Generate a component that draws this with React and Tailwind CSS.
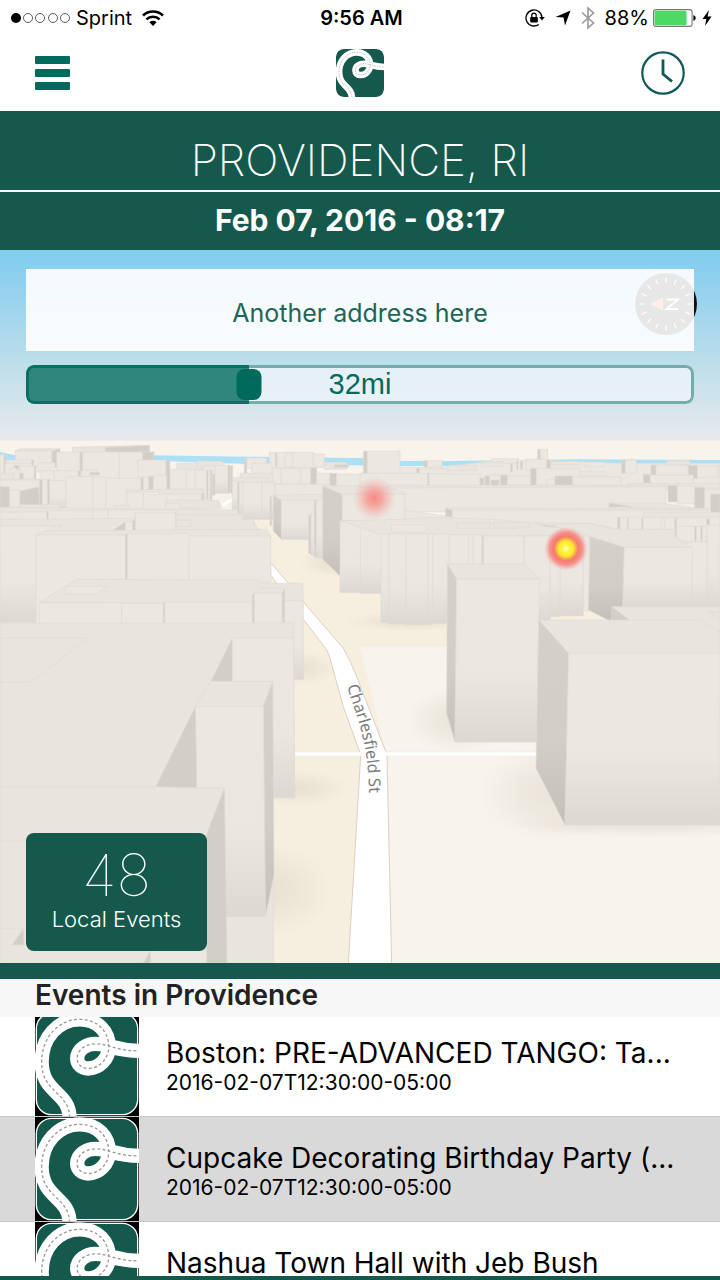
import React, { useState } from "react";

const events = [
  { title: "Boston: PRE-ADVANCED TANGO: Ta...", time: "2016-02-07T12:30:00-05:00" },
  { title: "Cupcake Decorating Birthday Party (...", time: "2016-02-07T12:30:00-05:00" },
  { title: "Nashua Town Hall with Jeb Bush" },
];

const ROAD =
  "M104 318 C104 240 20 245 20 150 C20 78 70 22 135 22 C190 22 222 60 222 105 C222 142 192 170 160 170 C140 170 127 157 127 140 C127 112 155 96 182 96 C225 96 240 117 316 117";

const RoadLogo = ({ className, framed = false }) => (
  <svg viewBox="0 0 313 313" className={className} aria-hidden="true">
    {framed && <rect width="313" height="313" fill="#000" />}
    <rect
      x={framed ? 4 : 0}
      y={framed ? 4 : 0}
      width={framed ? 305 : 313}
      height={framed ? 305 : 313}
      rx="46"
      fill="#14594b"
      stroke={framed ? "#fff" : "none"}
      strokeWidth="4"
    />
    <path d={ROAD} fill="none" stroke="#fff" strokeWidth="43" />
    <path d={ROAD} fill="none" stroke="#999" strokeWidth="4" strokeDasharray="9 7" />
  </svg>
);

const StatusBar = () => (
  <div className="grid h-9 grid-cols-[1fr_auto_1fr] items-center pl-[11px] pr-2 text-xl text-black">
    <div className="flex items-center">
      <svg viewBox="0 0 60 12" className="h-3 w-[60px]" aria-hidden="true">
        <circle cx="5" cy="6" r="5" />
        {[17, 29, 42, 54].map((x) => (
          <circle key={x} cx={x} cy="6" r="4.5" fill="none" stroke="#333" strokeWidth="0.8" />
        ))}
      </svg>
      <span className="ml-[5px]">Sprint</span>
      <svg viewBox="0 0 22 16" className="ml-[10px] h-4 w-[22px]" fill="none" stroke="#000" aria-hidden="true">
        <path d="M1 5.5 A14.5 14.5 0 0 1 21 5.5" strokeWidth="2.6" />
        <path d="M4.4 9.4 A9.6 9.6 0 0 1 17.6 9.4" strokeWidth="2.5" />
        <path d="M11 16 L7.4 12.2 A5.2 5.2 0 0 1 14.6 12.2 Z" fill="#000" stroke="none" />
      </svg>
    </div>
    <span className="font-semibold">9:56 AM</span>
    <div className="flex items-center justify-end">
      <svg viewBox="0 0 20 18" className="h-[18px] w-5" fill="none" stroke="#000" aria-hidden="true">
        <path d="M17 8.5 A8 8 0 1 0 13.8 15.4" strokeWidth="1.3" />
        <path d="M14.2 8 h5.6 l-2.8 3.6 z" fill="#000" stroke="none" />
        <rect x="5.2" y="8" width="7.6" height="5.6" rx="0.8" fill="#000" stroke="none" />
        <path d="M6.8 8 V6.3 a2.2 2.2 0 0 1 4.4 0 V8" strokeWidth="1.3" />
      </svg>
      <svg viewBox="0 0 16 16" className="ml-[10px] h-4 w-4" aria-hidden="true">
        <path d="M15.5 0.5 L10 15.5 L8.6 7.4 L0.5 7 Z" />
      </svg>
      <svg viewBox="0 0 14 24" className="ml-[10px] h-6 w-[14px]" fill="none" stroke="#999" strokeWidth="1.6" aria-hidden="true">
        <path d="M1 6.5 L12.5 17 L7 22 V2 L12.5 7 L1 17.5" />
      </svg>
      <span className="ml-[10px]">88%</span>
      <svg viewBox="0 0 43 18" className="ml-1 h-[18px] w-[43px]" aria-hidden="true">
        <rect x="0.6" y="0.6" width="38.5" height="16.8" rx="2.5" fill="#fff" stroke="#777" strokeWidth="1.1" />
        <rect x="1.6" y="1.8" width="32" height="14.4" rx="1.5" fill="#4cd964" />
        <path d="M40.4 6 q2.4 1 2.4 3 t-2.4 3 z" />
      </svg>
      <svg viewBox="0 0 10 16" className="ml-[6px] h-4 w-[10px]" aria-hidden="true">
        <path d="M7 0 L0.5 9 H4.3 L3 16 L9.6 6.6 H5.6 Z" />
      </svg>
    </div>
  </div>
);

const NavBar = () => (
  <nav className="grid h-[75px] grid-cols-3 items-center px-[35px] pb-[2px]">
    <button type="button" aria-label="Menu" className="flex w-[35px] flex-col gap-[5px]">
      <span className="h-2 rounded-[1px] bg-[#006b5c]" />
      <span className="h-2 rounded-[1px] bg-[#006b5c]" />
      <span className="h-2 rounded-[1px] bg-[#006b5c]" />
    </button>
    <RoadLogo className="h-12 w-12 justify-self-center rounded-lg" />
    <button type="button" aria-label="History" className="justify-self-end">
      <svg viewBox="0 0 44 44" className="block h-11 w-11" fill="none" stroke="#0f5a57">
        <circle cx="22" cy="22" r="20.7" strokeWidth="2.2" />
        <path d="M22 8.5 V23 L31 30.5" strokeWidth="2.8" />
      </svg>
    </button>
  </nav>
);

// building surfaces
const fills = {
  f: "#ebe8e1", // wall
  g: "url(#wall)", // wall fading towards the street
  t: "#e8e5de", // roof
  d: "#d2cfc8", // shaded side
  s: "url(#side)",
};

const Shapes = ({ list }) =>
  list.map(([fill, points], i) => (
    <polygon key={i} points={points} fill={fills[fill]} stroke="#dedbd4" strokeWidth="2" />
  ));

const box = (fill, x1, y1, x2, y2) => [fill, `${x1},${y1} ${x2},${y1} ${x2},${y2} ${x1},${y2}`];

const westFar = [
  box("f", 0, 73, 12, 140),
  box("d", 12, 73, 17, 140),
  ["t", "46,62 60,56 180,56 170,64"],
  box("f", 46, 63, 156, 112),
  ["d", "156,63 180,56 180,70 170,112 156,112"],
  ["t", "217,52 448,46 448,68 217,68"],
  ["d", "316,52 448,46 448,66 316,66"],
  box("f", 170, 66, 240, 145),
  box("d", 240, 66, 248, 125),
  box("f", 248, 66, 358, 150),
  box("f", 358, 66, 430, 150),
  box("d", 428, 66, 462, 95),
  box("f", 20, 90, 100, 100),
  box("d", 95, 90, 101, 112),
  box("f", 15, 100, 62, 150),
  box("d", 42, 106, 56, 118),
  box("f", 28, 114, 50, 132),
  box("f", 60, 108, 103, 150),
  box("d", 103, 108, 108, 150),
  box("f", 112, 98, 165, 125),
  box("t", 0, 130, 40, 150),
  box("d", 58, 130, 70, 148),
  box("f", 120, 122, 163, 152),
  box("f", 163, 122, 235, 152),
  box("d", 235, 122, 242, 140),
  box("f", 245, 120, 290, 140),
  box("d", 270, 127, 298, 135),
  box("f", 414, 90, 498, 140),
  ["d", "498,92 509,90 513,178 498,178"],
  box("t", 0, 147, 118, 180),
  box("f", 0, 150, 118, 235),
  box("d", 0, 170, 28, 232),
  box("f", 30, 181, 60, 232),
  ["d", "60,183 116,171 119,228 60,232"],
  box("d", 119, 148, 127, 225),
  box("f", 127, 148, 143, 225),
  box("d", 143, 148, 149, 225),
  box("g", 149, 152, 198, 238),
  box("f", 198, 140, 280, 240),
  box("f", 280, 142, 318, 240),
  box("f", 318, 145, 424, 240),
  box("d", 423, 143, 430, 182),
  box("f", 430, 143, 446, 182),
  box("d", 446, 140, 460, 182),
  box("f", 460, 136, 500, 180),
  box("t", 530, 100, 610, 120),
  box("t", 592, 93, 668, 110),
  box("f", 610, 108, 645, 195),
  box("d", 638, 132, 645, 195),
  box("g", 645, 107, 684, 190),
  box("d", 684, 107, 691, 189),
  box("d", 692, 107, 698, 189),
  box("f", 510, 118, 560, 178),
  box("f", 560, 118, 586, 178),
  box("f", 586, 120, 632, 208),
  box("d", 620, 122, 624, 205),
  box("d", 631, 120, 636, 208),
  box("t", 380, 179, 480, 188),
  box("f", 380, 186, 430, 238),
  box("t", 478, 178, 612, 196),
  box("f", 430, 193, 603, 238),
  box("d", 606, 190, 612, 210),
  ["t", "497,211 655,211 665,235 497,235"],
  box("f", 497, 220, 540, 238),
  box("t", 60, 224, 178, 235),
  box("t", 342, 226, 388, 238),
  ["t", "0,232 400,236 715,240 755,262 775,300 0,300"],
  box("f", 0, 246, 140, 268),
  box("d", 140, 244, 145, 268),
  box("f", 145, 242, 278, 268),
  box("f", 278, 241, 325, 268),
  box("f", 325, 240, 527, 268),
  ["t", "527,255 735,255 760,268 765,300 527,300"],
  box("t", 530, 270, 572, 290),
  ["t", "0,268 405,265 405,310 0,310"],
  ["f", "0,289 185,288 150,310 0,310"],
  ["d", "338,302 376,275 376,302"],
  box("f", 376, 275, 398, 303),
  ["d", "398,274 406,266 406,302 398,302"],
  box("f", 406, 248, 527, 310),
  ["g", "0,288 170,288 120,312 116,577 0,577"],
  ["t", "108,315 135,302 800,298 812,318 812,330 108,330"],
  box("f", 108, 314, 378, 580),
  box("d", 376, 312, 383, 452),
  box("f", 383, 311, 568, 452),
  box("f", 568, 318, 812, 456),
];

const westNear = [
  ["t", "118,518 198,468 232,448 775,450 778,460 908,460 910,512 760,520"],
  ["f", "198,469 322,469 285,492 198,492"],
  box("f", 118, 518, 365, 582),
  box("f", 365, 520, 490, 582),
  box("d", 490, 518, 495, 582),
  box("f", 495, 516, 757, 582),
  box("d", 757, 492, 763, 582),
  box("g", 852, 512, 910, 748),
  ["t", "763,490 778,475 855,475 847,490"],
  box("f", 763, 490, 847, 582),
  ["d", "847,490 855,475 853,582 847,582"],
  ["t", "0,580 880,578 884,1103 820,1103 820,1600 0,1600"],
  ["t", "0,625 263,625 95,755 0,757"],
  ["d", "697,624 697,757 632,755"],
  ["g", "697,624 880,624 884,1103 818,1103 818,755 697,755"],
  ["t", "632,754 818,754 788,832 586,832"],
  ["s", "818,754 822,1335 796,1460 790,830"],
  // covers the roof left of the alley
  ["g", "586,830 790,830 796,1460 676,1460 673,1075 590,1074"],
  ["d", "586,830 590,1074 467,1071"],
  ["t", "467,1071 673,1075 620,1213 620,1600 0,1600 0,1071"],
  ["d", "673,1075 681,1600 620,1600 620,1213"],
  ["t", "0,1233 250,1233 250,1495 0,1495"],
  ["d", "70,1497 72,1545 36,1545"],
  ["d", "452,1560 452,1600 430,1600"],
  ["f", "452,1560 620,1560 620,1600 452,1600"],
];

const center = [
  box("f", 740, 84, 800, 115),
  box("d", 733, 90, 740, 132),
  box("f", 808, 67, 940, 114),
  box("d", 826, 69, 831, 110),
  box("f", 855, 69, 878, 110),
  box("f", 940, 72, 973, 112),
  box("t", 973, 97, 1040, 118),
  box("d", 1003, 104, 1045, 112),
  box("f", 755, 100, 815, 135),
  box("t", 720, 130, 890, 160),
  box("f", 818, 115, 935, 162),
  box("f", 843, 115, 903, 162),
  box("d", 932, 113, 950, 162),
  box("f", 950, 130, 990, 165),
  box("d", 990, 130, 1010, 167),
  box("f", 1010, 132, 1120, 170),
  box("t", 700, 143, 805, 160),
  box("g", 697, 155, 713, 238),
  box("d", 713, 157, 718, 250),
  box("g", 718, 155, 728, 252),
  box("g", 728, 158, 785, 268),
  box("g", 785, 158, 825, 268),
  box("f", 825, 163, 970, 200),
  box("d", 810, 200, 815, 286),
  ["t", "820,195 962,193 968,212 844,212"],
  ["s", "820,195 844,212 844,328 820,303"],
  box("g", 844, 211, 942, 328),
  box("d", 926, 256, 933, 370),
  box("g", 933, 250, 944, 376),
  box("d", 943, 211, 949, 382),
  box("g", 949, 211, 970, 384),
  ["t", "968,168 1185,168 1215,193 1027,193"],
  ["s", "968,168 1027,193 1027,272 1020,438 968,388"],
  box("f", 1027, 193, 1215, 275),
];

// east side is drawn from x = 1080
const east = [
  box("d", 10, 63, 22, 132),
  box("f", 22, 63, 120, 132),
  box("d", 192, 92, 202, 116),
  box("f", 202, 92, 246, 116),
  box("d", 533, 58, 541, 90),
  box("f", 541, 58, 563, 90),
  ["f", "120,112 250,112 370,96 480,90 660,95 780,100 1080,100 1080,180 120,180"],
  box("f", 395, 86, 475, 100),
  box("d", 452, 100, 457, 125),
  box("d", 470, 94, 474, 118),
  box("d", 482, 94, 487, 118),
  box("f", 498, 88, 560, 120),
  box("d", 560, 90, 571, 115),
  box("t", 575, 94, 660, 104),
  box("f", 675, 96, 735, 110),
  box("t", 365, 95, 430, 110),
  box("d", 170, 115, 178, 132),
  box("f", 178, 117, 265, 132),
  box("t", 265, 106, 350, 122),
  box("d", 785, 90, 796, 130),
  box("f", 796, 90, 830, 130),
  box("d", 873, 105, 888, 135),
  box("f", 888, 105, 985, 140),
  box("t", 920, 92, 990, 104),
  box("d", 985, 106, 1012, 145),
  box("f", 1012, 108, 1074, 142),
  box("f", 0, 130, 205, 170),
  box("d", 203, 130, 207, 170),
  box("f", 207, 132, 360, 170),
  box("d", 360, 145, 372, 166),
  box("d", 375, 138, 389, 166),
  box("f", 389, 135, 422, 152),
  box("d", 393, 150, 417, 166),
  box("d", 422, 135, 442, 166),
  box("f", 442, 138, 512, 166),
  box("d", 512, 115, 529, 166),
  box("f", 529, 115, 660, 166),
  box("f", 560, 148, 585, 166),
  box("d", 585, 138, 638, 166),
  box("f", 638, 141, 783, 166),
  box("f", 660, 125, 738, 138),
  box("d", 850, 133, 871, 160),
  box("f", 871, 135, 1000, 168),
  box("t", 800, 160, 1080, 180),
  box("t", 85, 166, 918, 178),
  ["f", "100,174 918,170 918,245 135,245 135,190"],
  box("d", 924, 166, 952, 216),
  box("f", 952, 168, 1006, 222),
  box("d", 1004, 172, 1034, 236),
  box("f", 1034, 178, 1080, 240),
  box("d", 1052, 192, 1080, 252),
  ["t", "747,219 900,219 1040,238 820,234"],
  ["d", "747,219 820,231 747,231"],
  ["t", "257,234 1045,236 1045,244 277,244"],
  ["d", "257,234 277,241 277,268 257,268"],
  box("f", 277, 241, 1045, 320),
  box("f", 775, 262, 945, 300),
  box("d", 773, 262, 780, 298),
  box("d", 802, 264, 805, 298),
  box("d", 845, 264, 849, 298),
  box("f", 904, 264, 914, 298),
  box("t", 850, 247, 1080, 262),
  box("f", 945, 262, 1080, 340),
  box("d", 945, 264, 950, 332),
  box("f", 950, 289, 1040, 335),
  box("d", 1004, 289, 1009, 332),
  box("d", 1022, 289, 1027, 332),
  box("d", 1040, 266, 1048, 284),
  ["f", "135,240 277,262 277,300 135,280"],
  box("g", -60, 272, 3, 488),
  box("g", 1, 275, 66, 490),
  ["t", "-60,272 130,268 200,262 405,268 510,278 690,280 880,318 690,325 493,318 63,314"],
  box("f", 95, 285, 198, 306),
  box("t", 290, 280, 390, 295),
  box("f", 390, 283, 470, 296),
  box("t", 400, 278, 508, 292),
  ["d", "530,281 625,293 560,290"],
  ["g", "63,312 88,312 88,580 63,576"],
  box("g", 88, 312, 138, 582),
  box("g", 138, 312, 205, 584),
  box("g", 205, 312, 218, 583),
  box("g", 218, 312, 268, 580),
  box("f", 268, 314, 326, 450),
  box("f", 326, 314, 340, 450),
  box("f", 340, 314, 367, 450),
  box("d", 366, 316, 371, 402),
  box("f", 371, 318, 493, 450),
  ["f", "493,318 530,314 560,318 688,300 688,345 493,350"],
  box("g", 493, 318, 571, 570),
  box("g", 571, 318, 601, 560),
  box("g", 601, 318, 670, 557),
  box("f", 670, 318, 688, 542),
  ["t", "570,284 690,280 762,298 945,298 945,320 998,352 793,352 690,320"],
  box("g", 993, 335, 1042, 532),
  box("g", 1042, 286, 1080, 532),
  ["s", "690,320 793,352 788,570 745,570 685,540"],
  ["g", "793,352 998,352 993,532 788,532"],
  ["d", "755,530 815,572 755,572"],
  ["t", "755,530 1080,530 1080,610 815,575"],
  ["t", "1045,546 1080,546 1080,566"],
  ["t", "262,402 490,402 538,447 290,447"],
  ["s", "262,402 290,447 285,936 260,850"],
  ["g", "290,447 538,447 533,936 285,936"],
  ["t", "536,570 1020,570 1080,605 1080,672 626,672"],
  ["s", "536,570 626,670 615,1185 528,1015"],
  ["g", "626,670 1080,670 1080,1185 615,1185"],
];

const CityMap = () => (
  <svg
    viewBox="0 -540 2160 2139"
    preserveAspectRatio="xMidYMin slice"
    className="absolute inset-0 h-full w-full"
    role="img"
    aria-label="Map of events around Charlesfield St"
  >
    <defs>
      <linearGradient id="sky" x1="0" y1="0" x2="0" y2="1">
        <stop offset="0" stopColor="#82cdef" />
        <stop offset="0.15" stopColor="#8ed0ee" />
        <stop offset="0.62" stopColor="#c0dfea" />
        <stop offset="1" stopColor="#e8eaec" />
      </linearGradient>
      <linearGradient id="wall" x1="0" y1="0" x2="0" y2="1">
        <stop offset="0" stopColor="#ece8e1" />
        <stop offset="0.6" stopColor="#eae7e0" />
        <stop offset="1" stopColor="#dcd9d2" />
      </linearGradient>
      <linearGradient id="side" x1="0" y1="0" x2="0" y2="1">
        <stop offset="0" stopColor="#d4d1ca" />
        <stop offset="0.6" stopColor="#d1cec7" />
        <stop offset="1" stopColor="#c3c0b9" />
      </linearGradient>
      <radialGradient id="shade">
        <stop offset="0" stopColor="#d9d2c2" stopOpacity="0.5" />
        <stop offset="0.5" stopColor="#d9d2c2" stopOpacity="0.28" />
        <stop offset="1" stopColor="#d9d2c2" stopOpacity="0" />
      </radialGradient>
      <radialGradient id="warm">
        <stop offset="0" stopColor="#f98984" />
        <stop offset="0.35" stopColor="#f79b95" stopOpacity="0.85" />
        <stop offset="1" stopColor="#f3b7b0" stopOpacity="0" />
      </radialGradient>
      <radialGradient id="hot">
        <stop offset="0" stopColor="#fffde0" />
        <stop offset="0.14" stopColor="#fdf84a" />
        <stop offset="0.35" stopColor="#fbe62e" />
        <stop offset="0.48" stopColor="#f5a052" />
        <stop offset="0.56" stopColor="#f47a70" />
        <stop offset="0.75" stopColor="#f68a84" stopOpacity="0.9" />
        <stop offset="1" stopColor="#f7b0a8" stopOpacity="0" />
      </radialGradient>
    </defs>

    <rect y="-540" width="2160" height="574" fill="url(#sky)" />
    <rect y="32" width="2160" height="1567" fill="#f9f4eb" />
    <polygon
      points="0,66 46,76 462,76 740,80 1080,84 1200,93 1340,93 1740,88 2160,90 2160,108 1200,108 740,102 462,92 0,92"
      fill="#abe0f6"
    />
    <polygon points="0,240 760,268 1080,300 1900,500 1900,652 1342,652 1080,652 1180,1060 1180,1599 0,1599" fill="#f6efdf" />
    <polygon points="1082,652 1342,652 2160,640 2160,1599 1177,1599 1160,967" fill="#f8f4ed" />
    <polygon points="640,198 697,189 697,235 665,222" fill="#f5f2ec" />
    <polygon points="664,222 697,204 697,212 672,228" fill="#fff" />

    <ellipse cx="905" cy="715" rx="105" ry="50" fill="url(#shade)" />
    <ellipse cx="890" cy="1075" rx="150" ry="55" fill="url(#shade)" />
    <ellipse cx="800" cy="1380" rx="200" ry="140" fill="url(#shade)" />
    <ellipse cx="1000" cy="400" rx="100" ry="40" fill="url(#shade)" />
    <ellipse cx="1230" cy="575" rx="200" ry="30" fill="url(#shade)" />
    <ellipse cx="1370" cy="870" rx="150" ry="100" fill="url(#shade)" />
    <ellipse cx="1670" cy="1090" rx="240" ry="150" fill="url(#shade)" />
    <ellipse cx="1950" cy="1180" rx="420" ry="45" fill="url(#shade)" />

    <path d="M880 972 H1640" stroke="#ece6dc" strokeWidth="14" />
    <path
      d="M812 398 L862 456 L910 516 L1030 655 Q1050 690 1066 730 L1158 967 L1161 978 L1175 1600 H1045 L1082 978 L1079 965 L1030 830 L994 700 Q988 672 978 656 L910 568 L812 435 Z"
      fill="#fff"
      stroke="#dccfc3"
      strokeWidth="3"
    />
    <path d="M880 972 H1640" stroke="#fff" strokeWidth="10" />

    <Shapes list={westFar} />
    <Shapes list={center} />
    <Shapes list={westNear} />
    <g transform="translate(1080 0)">
      <Shapes list={east} />
      <circle cx="43" cy="205" r="66" fill="url(#warm)" />
      <circle cx="618" cy="356" r="66" fill="url(#hot)" />
    </g>

    <path id="charlesfield" d="M1041 768 C1064 850 1110 930 1107 1120" fill="none" />
    <text fill="#7c7c7c" fontSize="49" fontFamily="'Noto Sans', 'Open Sans', sans-serif">
      <textPath href="#charlesfield">Charlesfield St</textPath>
    </text>
  </svg>
);

const Compass = () => (
  <svg viewBox="0 0 62 62" className="absolute right-[23px] top-[23px] h-[62px] w-[62px]" aria-hidden="true">
    <circle cx="31" cy="31" r="31" fill="#111" />
    {Array.from({ length: 16 }, (_, i) => (
      <path key={i} d="M31 4.5 V10" stroke="#fff" strokeWidth="1.2" transform={`rotate(${i * 22.5} 31 31)`} />
    ))}
    <path d="M14 31 L28 24.5 V37.5 Z" fill="#ff3b30" />
    <path d="M31.5 26.5 H43 L31.5 36 H43" fill="none" stroke="#fff" strokeWidth="1.8" />
  </svg>
);

const RadiusSlider = () => {
  const [miles, setMiles] = useState(32);
  const percent = (miles / 96) * 100;

  return (
    <div className="relative mt-[14px] h-[39px] overflow-hidden rounded-lg bg-[#edf4fb]/80">
      <div className="absolute inset-0 rounded-lg border-3 border-[#006b5c]/50" />
      <div
        className="absolute inset-y-0 left-0 rounded-l-lg border-y-3 border-l-3 border-[#00695c]/50 bg-[#006b5c]/80"
        style={{ width: `${percent}%` }}
      />
      <div
        className="absolute inset-y-1 w-[25px] -translate-x-1/2 rounded-lg bg-[#006b5c]"
        style={{ left: `${percent}%` }}
      />
      <span className="absolute inset-0 text-center font-['Liberation_Sans',sans-serif] text-[29px] leading-[39px] text-[#006b5c]">
        {miles}mi
      </span>
      <input
        type="range"
        min="1"
        max="96"
        value={miles}
        onChange={(e) => setMiles(Number(e.target.value))}
        aria-label="Search radius in miles"
        className="absolute inset-0 h-full w-full cursor-pointer opacity-0"
      />
    </div>
  );
};

const EventRow = ({ title, time, active }) => (
  <li className={active ? "bg-[#d9d9d9]" : "bg-white"}>
    <a href="#event" className="flex h-[104px] gap-[27px] px-[35px]">
      <RoadLogo framed className="h-[104px] w-[104px] shrink-0" />
      <div className="min-w-0 pt-6 text-black">
        <p className="truncate text-[28px] leading-[34px]">{title}</p>
        {time && <p className="text-[21px] leading-[26px]">{time}</p>}
      </div>
    </a>
  </li>
);

export default function App() {
  return (
    <div className="flex h-screen flex-col overflow-hidden bg-white font-['Inter',sans-serif]">
      <StatusBar />
      <NavBar />

      <header className="bg-[#14594b] text-center text-white">
        <h1 className="border-b-2 border-white pt-[19px] text-[44px] font-extralight leading-[60px]">PROVIDENCE, RI</h1>
        <p className="pb-[2px] text-[30px] font-bold leading-[56px]">Feb 07, 2016 - 08:17</p>
      </header>

      <main className="relative min-h-0 flex-1 px-[26px] pt-[19px]">
        <CityMap />
        <Compass />
        <div className="relative">
          <input
            type="text"
            aria-label="Address"
            placeholder="Another address here"
            className="block h-[82px] w-full bg-white/90 pt-[6px] text-center text-[25px] text-[#1f6558] outline-none placeholder:text-[#1f6558]"
          />
          <RadiusSlider />
        </div>
        <div className="absolute bottom-3 left-[26px] h-[118px] w-[181px] rounded-lg bg-[#14594b] pt-3 text-center text-white">
          <p className="text-[58px] font-thin leading-[60px]">48</p>
          <p className="text-[22px] font-light leading-[28px]">Local Events</p>
        </div>
      </main>

      <section className="flex h-[317px] shrink-0 flex-col border-b-4 border-t-16 border-[#14594b]">
        <h2 className="h-[38px] shrink-0 bg-[#f7f7f7] px-[35px] text-[28px] font-semibold leading-[32px] text-[#222]">
          Events in Providence
        </h2>
        <div className="min-h-0 flex-1 overflow-hidden">
          <ul className="-mt-[5px] divide-y divide-[#c8c8c8]">
            {events.map((event, i) => (
              <EventRow key={event.title} {...event} active={i === 1} />
            ))}
          </ul>
        </div>
      </section>
    </div>
  );
}
